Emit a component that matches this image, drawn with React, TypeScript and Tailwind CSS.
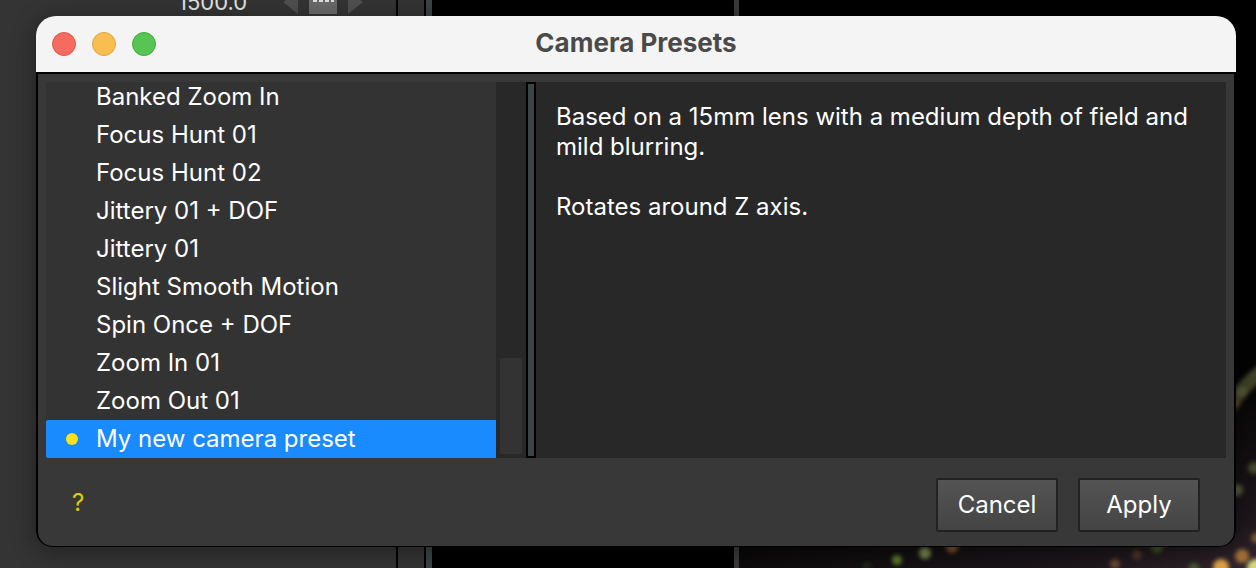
import { useState } from "react";

const presets = [
  "Banked Zoom In",
  "Focus Hunt 01",
  "Focus Hunt 02",
  "Jittery 01 + DOF",
  "Jittery 01",
  "Slight Smooth Motion",
  "Spin Once + DOF",
  "Zoom In 01",
  "Zoom Out 01",
  "My new camera preset",
];

const lights = [
  { x: 515, y: 148, r: 6, c: "#45482c" },
  { x: 498, y: 170, r: 6, c: "#56583a" },
  { x: 517, y: 218, r: 5, c: "#7a5a30" },
  { x: 503, y: 236, r: 7, c: "#a27038" },
  { x: 482, y: 247, r: 8, c: "#e0a446" },
  { x: 517, y: 248, r: 9, c: "#d6d680" },
  { x: 158, y: 240, r: 5, c: "#5c7c28" },
  { x: 186, y: 233, r: 6, c: "#75824a" },
  { x: 213, y: 227, r: 6, c: "#7a5020" },
  { x: 128, y: 246, r: 4, c: "#20261a" },
  { x: 376, y: 244, r: 5, c: "#6a4830" },
  { x: 398, y: 235, r: 5, c: "#4c3428" },
  { x: 418, y: 227, r: 6, c: "#3e5022" },
  { x: 455, y: 248, r: 5, c: "#4c5a30" },
];

function Backdrop() {
  return (
    <div className="flex h-full" aria-hidden="true">
      <div className="flex w-[396px] shrink-0 items-start bg-[#343434]">
        <span className="-mt-3 ml-[178px] text-[22px] leading-7 text-[#e4e4e4]">1500.0</span>
        <svg className="ml-auto mr-8 h-4 w-20" viewBox="0 0 80 16">
          <path d="M-1 2 14-8V14Z M79 2 64-8V14Z" fill="#505050" />
          <path d="M25 0H53V14H25Z" fill="#6a6a6a" />
          <path d="M29 1H50" stroke="#e0e0e0" strokeWidth="2" strokeDasharray="4 2" />
        </svg>
      </div>
      <div className="w-[30px] shrink-0 border-x-2 border-black bg-[#343434]" />
      <div className="w-1.5 shrink-0 bg-[#3a4444]" />
      <div className="w-[302px] shrink-0 bg-black" />
      <div className="w-[5px] shrink-0 bg-[#3a3a3a]" />
      <div className="flex flex-1 items-end justify-end bg-black">
        <svg className="h-[248px] w-[517px] shrink-0" viewBox="0 0 517 248">
          <defs>
            <filter id="soft" x="-60%" y="-60%" width="220%" height="220%">
              <feGaussianBlur stdDeviation="2" />
            </filter>
            <linearGradient id="haze" x1="0.4" y1="0" x2="1" y2="1">
              <stop offset="0.4" stopColor="#030303" />
              <stop offset="0.85" stopColor="#1d171b" />
              <stop offset="1" stopColor="#33252e" />
            </linearGradient>
          </defs>
          <path d="M0 0H517V248H0Z" fill="url(#haze)" />
          <g filter="url(#soft)">
            <path d="M490 88Q502 66 530 46" fill="none" stroke="#3f4328" strokeWidth="14" />
            <circle cx="503" cy="72" r="5" fill="#565c38" />
            <circle cx="498" cy="84" r="3" fill="#654c22" />
            {lights.map((l) => (
              <circle key={l.x + l.c} cx={l.x} cy={l.y} r={l.r} fill={l.c} />
            ))}
          </g>
        </svg>
      </div>
    </div>
  );
}

export default function App() {
  const [selected, setSelected] = useState(presets.length - 1);
  const action =
    "h-[54px] w-[122px] rounded-xs border-2 border-[#222222] bg-linear-to-b from-[#545454] to-[#444444] text-2xl text-white";

  return (
    <main className="relative h-screen overflow-hidden bg-black font-['Inter','Liberation_Sans',sans-serif]">
      <Backdrop />
      <section
        role="dialog"
        aria-labelledby="dialog-title"
        className="absolute inset-0 mt-4 mr-5 mb-[21px] ml-9 flex flex-col overflow-hidden rounded-t-[20px] rounded-b-2xl bg-[#383838] shadow-[0_4px_24px_rgba(0,0,0,0.4)]"
      >
        <header className="grid h-14 shrink-0 grid-cols-[1fr_auto_1fr] items-center bg-[#f4f4f4] px-4">
          <div className="flex gap-4">
            <button aria-label="Close" className="size-6 rounded-full border border-[#db5a4e] bg-[#f56b5f]" />
            <button aria-label="Minimize" className="size-6 rounded-full border border-[#dda440] bg-[#f8be4f]" />
            <button aria-label="Zoom" className="size-6 rounded-full border border-[#46a83f] bg-[#57c554]" />
          </div>
          <h1 id="dialog-title" className="pb-0.5 text-[26px] leading-8 font-bold text-[#4a4a4a]">
            Camera Presets
          </h1>
        </header>

        <div className="flex min-h-0 flex-1 flex-col rounded-b-2xl border-2 border-b border-black px-2 pt-2 text-2xl text-white">
          <div className="flex min-h-0 flex-1">
            <ul className="flex w-[450px] shrink-0 flex-col justify-end overflow-hidden bg-[#333333]">
              {presets.map((name, i) => (
                <li key={name} className="shrink-0">
                  <button
                    onClick={() => setSelected(i)}
                    className={`flex h-[38px] w-full items-center rounded-l-xs pl-5 text-left ${
                      i === selected ? "bg-[#1a8aff]" : ""
                    }`}
                  >
                    <span className={`mr-[18px] size-3 rounded-full ${i === selected ? "bg-[#ffe119]" : ""}`} />
                    {name}
                  </button>
                </li>
              ))}
            </ul>
            <div className="flex w-[30px] shrink-0 items-end bg-[#282828] p-1">
              <div className="h-24 w-full rounded-xs bg-[#333333]" />
            </div>
            <div className="w-2.5 shrink-0 border-2 border-black bg-[#3a4444]" />
            <div className="flex-1 bg-[#282828] px-5 py-5 leading-[30px]">
              <p>Based on a 15mm lens with a medium depth of field and mild blurring.</p>
              <p className="mt-[30px]">Rotates around Z axis.</p>
            </div>
          </div>
          <footer className="flex h-[88px] shrink-0 items-center justify-between px-[26px] pt-1.5">
            <button aria-label="Help" className="pb-1 text-2xl text-[#e0cb00]">?</button>
            <div className="flex gap-5">
              <button className={action}>Cancel</button>
              <button className={action}>Apply</button>
            </div>
          </footer>
        </div>
      </section>
    </main>
  );
}
